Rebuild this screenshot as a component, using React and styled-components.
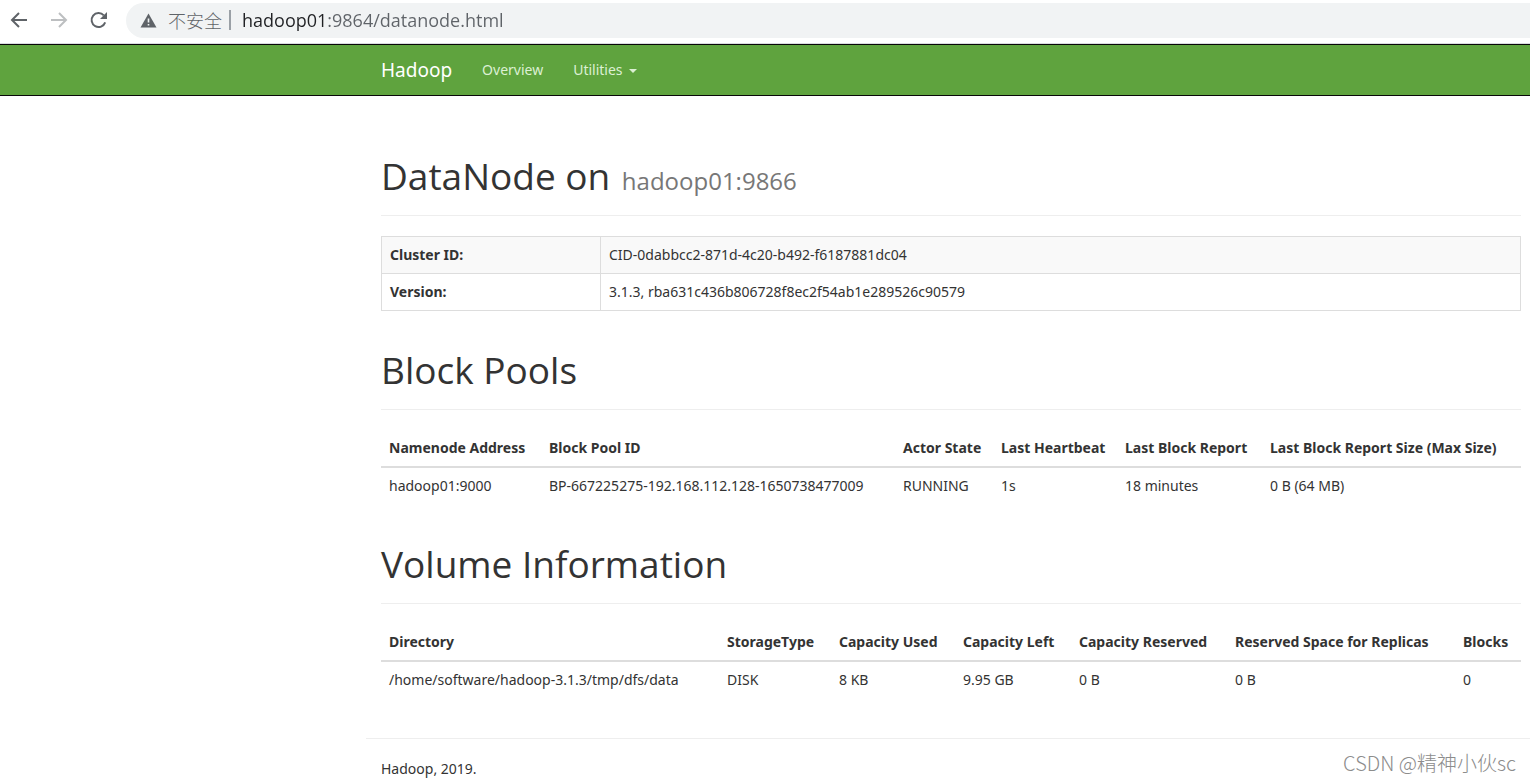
import styled, { createGlobalStyle } from "styled-components";

const GlobalStyle = createGlobalStyle`
  * {
    box-sizing: border-box;
  }
  body {
    margin: 0;
    background-color: #fff;
    color: #333;
    font-family: "Noto Sans", "Noto Sans CJK SC", sans-serif;
    font-size: 14px;
    line-height: 20px;
  }
`;

const Page = styled.div`
  position: relative;
  min-height: 100vh;
`;

const Toolbar = styled.div`
  display: flex;
  align-items: center;
  height: 44px;
  padding: 0 0 3px 8px;
  border-bottom: 1px solid #dadce0;
`;

const ToolButton = styled.button`
  display: flex;
  align-items: center;
  justify-content: center;
  width: 22px;
  height: 22px;
  margin-right: 18px;
  padding: 0;
  border: none;
  background: none;
  color: #5f6368;
  &:disabled {
    color: #bdbfc1;
  }
`;

const AddressBar = styled.div`
  display: flex;
  flex: 1;
  align-items: center;
  height: 35px;
  margin-left: -2px;
  padding-left: 14px;
  border-radius: 18px 0 0 18px;
  background-color: #f1f3f4;
`;

const NotSecure = styled.label`
  display: flex;
  align-items: center;
  color: #5f6368;
  font-family: "Noto Sans CJK SC", sans-serif;
  font-weight: 300;
  font-size: 18px;
  line-height: 20px;
  svg {
    margin-right: 11px;
  }
  &::after {
    content: "";
    width: 2px;
    height: 20px;
    margin: 0 11px 0 7px;
    background-color: #9aa0a6;
  }
`;

/* host is darker than the rest of the address */
const AddressInput = styled.input`
  flex: 1;
  min-width: 0;
  height: 28px;
  padding: 0;
  border: none;
  outline: none;
  background-image: linear-gradient(90deg, #202124 85px, #5f6368 85px);
  background-clip: text;
  color: transparent;
  caret-color: #202124;
  font-family: "Open Sans", sans-serif;
  font-size: 18px;
`;

const Navbar = styled.nav`
  display: flex;
  height: 52px;
  padding-left: 366px;
  border: 1px solid #080808;
  border-width: 1px 0;
  background-color: #5fa33e;
`;

const NavLink = styled.a`
  display: flex;
  align-items: center;
  padding: 0 15px;
  color: ${(props) => (props.$brand ? "#fff" : "#dcf0d3")};
  font-size: ${(props) => (props.$brand ? 19 : 14)}px;
  text-decoration: none;
`;

const Caret = styled.span`
  margin: 2px 0 0 6px;
  border-top: 4px solid;
  border-right: 4px solid transparent;
  border-left: 4px solid transparent;
`;

const Container = styled.main`
  padding: 20px 9px 20px 381px;
`;

const PageHeader = styled.div`
  margin: 40px 0 20px;
  padding-bottom: 19px;
  border-bottom: 1px solid #eee;
  h1 {
    margin: 0;
    font-family: "Open Sans", sans-serif;
    font-size: 37px;
    font-weight: 400;
    line-height: 40px;
  }
  small {
    margin-left: 2px;
    color: #777;
    font-size: 24px;
    line-height: 1;
  }
`;

const Table = styled.table`
  width: 100%;
  margin-bottom: 20px;
  table-layout: fixed;
  border-collapse: collapse;
  white-space: nowrap;
  th,
  td {
    padding: 8px;
    text-align: left;
  }
  thead th {
    border-bottom: 2px solid #ddd;
  }
`;

const BorderedTable = styled(Table)`
  margin-bottom: -1px;
  th,
  td {
    border: 1px solid #ddd;
  }
  tr:nth-child(odd) {
    background-color: #f9f9f9;
  }
`;

const Col = styled.col`
  width: ${(props) => props.$width}px;
`;

const Footer = styled.footer`
  margin-left: 366px;
  padding: 20px 15px 0;
  border-top: 1px solid #eee;
`;

const Watermark = styled.div`
  position: absolute;
  right: 14px;
  bottom: 6px;
  color: #8c8c8c;
  font-family: "Noto Sans CJK SC", sans-serif;
  font-weight: 300;
  font-size: 20px;
  line-height: 26px;
`;

const blockPools = {
  columns: [
    { label: "Namenode Address", width: 160 },
    { label: "Block Pool ID", width: 354 },
    { label: "Actor State", width: 98 },
    { label: "Last Heartbeat", width: 124 },
    { label: "Last Block Report", width: 145 },
    { label: "Last Block Report Size (Max Size)", width: 259 },
  ],
  rows: [
    [
      "hadoop01:9000",
      "BP-667225275-192.168.112.128-1650738477009",
      "RUNNING",
      "1s",
      "18 minutes",
      "0 B (64 MB)",
    ],
  ],
};

const volumes = {
  columns: [
    { label: "Directory", width: 338 },
    { label: "StorageType", width: 112 },
    { label: "Capacity Used", width: 124 },
    { label: "Capacity Left", width: 116 },
    { label: "Capacity Reserved", width: 156 },
    { label: "Reserved Space for Replicas", width: 228 },
    { label: "Blocks", width: 66 },
  ],
  rows: [
    [
      "/home/software/hadoop-3.1.3/tmp/dfs/data",
      "DISK",
      "8 KB",
      "9.95 GB",
      "0 B",
      "0 B",
      "0",
    ],
  ],
};

const DataTable = ({ columns, rows }) => {
  return (
    <Table>
      <colgroup>
        {columns.map((column) => (
          <Col key={column.label} $width={column.width} />
        ))}
      </colgroup>
      <thead>
        <tr>
          {columns.map((column) => (
            <th key={column.label} scope="col">
              {column.label}
            </th>
          ))}
        </tr>
      </thead>
      <tbody>
        {rows.map((row) => (
          <tr key={row[0]}>
            {row.map((cell, i) => (
              <td key={columns[i].label}>{cell}</td>
            ))}
          </tr>
        ))}
      </tbody>
    </Table>
  );
};

const ArrowIcon = ({ forward }) => (
  <svg width="22" height="22" viewBox="0 0 22 22" fill="none" stroke="currentColor" strokeWidth="2">
    {forward ? (
      <path d="M3 11H18M11 4L18 11L11 18" />
    ) : (
      <path d="M19 11H4M11 4L4 11L11 18" />
    )}
  </svg>
);

const ReloadIcon = () => (
  <svg width="22" height="22" viewBox="0 0 22 22" fill="none">
    <path d="M17.2 13.4A7 7 0 1 1 15.8 6.3" stroke="currentColor" strokeWidth="2" />
    <path d="M19 3V10H12Z" fill="currentColor" />
  </svg>
);

const WarningIcon = () => (
  <svg width="17" height="15" viewBox="0 0 17 15">
    <path d="M8.5 0.5L16.5 14.5H0.5Z" fill="#5f6368" />
    <path d="M7.7 5.5H9.3V9.6H7.7ZM7.7 11H9.3V12.6H7.7Z" fill="#f1f3f4" />
  </svg>
);

const App = () => {
  return (
    <Page>
      <GlobalStyle />
      <Toolbar>
        <ToolButton aria-label="Back">
          <ArrowIcon />
        </ToolButton>
        <ToolButton aria-label="Forward" disabled>
          <ArrowIcon forward />
        </ToolButton>
        <ToolButton aria-label="Reload">
          <ReloadIcon />
        </ToolButton>
        <AddressBar>
          <NotSecure htmlFor="address">
            <WarningIcon />
            不安全
          </NotSecure>
          <AddressInput id="address" defaultValue="hadoop01:9864/datanode.html" />
        </AddressBar>
      </Toolbar>
      <Navbar>
        <NavLink $brand href="#hadoop">
          Hadoop
        </NavLink>
        <NavLink href="#overview">Overview</NavLink>
        <NavLink href="#utilities">
          Utilities
          <Caret />
        </NavLink>
      </Navbar>
      <Container>
        <PageHeader>
          <h1>
            DataNode on <small>hadoop01:9866</small>
          </h1>
        </PageHeader>
        <BorderedTable>
          <colgroup>
            <Col $width={219} />
            <col />
          </colgroup>
          <tbody>
            <tr>
              <th scope="row">Cluster ID:</th>
              <td>CID-0dabbcc2-871d-4c20-b492-f6187881dc04</td>
            </tr>
            <tr>
              <th scope="row">Version:</th>
              <td>3.1.3, rba631c436b806728f8ec2f54ab1e289526c90579</td>
            </tr>
          </tbody>
        </BorderedTable>
        <PageHeader>
          <h1>Block Pools</h1>
        </PageHeader>
        <DataTable {...blockPools} />
        <PageHeader>
          <h1>Volume Information</h1>
        </PageHeader>
        <DataTable {...volumes} />
      </Container>
      <Footer>Hadoop, 2019.</Footer>
      <Watermark>CSDN @精神小伙sc</Watermark>
    </Page>
  );
};

export default App;
